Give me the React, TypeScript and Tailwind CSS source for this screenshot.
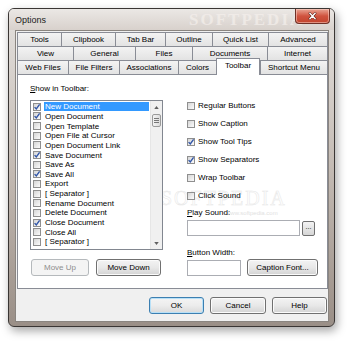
import React from "react";

const font = "font-['Liberation_Sans',Arial,sans-serif]";

function Box({ checked }: { checked?: boolean }) {
  return (
    <span className="relative inline-block h-[8px] w-[8px] shrink-0 border border-[#8f8f8f] bg-gradient-to-br from-[#d6d6d6] to-[#fbfbfb]">
      {checked && (
        <svg viewBox="0 0 8 8" className="absolute -left-px -top-px h-[8px] w-[8px]">
          <path d="M1.6 4.1 L3.3 6 L6.6 1.3" stroke="#3156a8" strokeWidth="1.4" fill="none" />
        </svg>
      )}
    </span>
  );
}

const rows: { label: string; w: number }[][] = [
  [
    { label: "Tools", w: 44 },
    { label: "Clipbook", w: 54 },
    { label: "Tab Bar", w: 50 },
    { label: "Outline", w: 47 },
    { label: "Quick List", w: 56 },
    { label: "Advanced", w: 59 },
  ],
  [
    { label: "View", w: 56 },
    { label: "General", w: 62 },
    { label: "Files", w: 57 },
    { label: "Documents", w: 75 },
    { label: "Internet", w: 60 },
  ],
  [
    { label: "Web Files", w: 51 },
    { label: "File Filters", w: 51 },
    { label: "Associations", w: 59 },
    { label: "Colors", w: 38 },
    { label: "Toolbar", w: 44 },
    { label: "Shortcut Menu", w: 67 },
  ],
];

const items: [string, boolean][] = [
  ["New Document", true],
  ["Open Document", true],
  ["Open Template", false],
  ["Open File at Cursor", false],
  ["Open Document Link", false],
  ["Save Document", true],
  ["Save As", false],
  ["Save All", true],
  ["Export", false],
  ["[ Separator ]", false],
  ["Rename Document", false],
  ["Delete Document", false],
  ["Close Document", true],
  ["Close All", false],
  ["[ Separator ]", false],
];

const options: [string, boolean][] = [
  ["Regular Buttons", false],
  ["Show Caption", false],
  ["Show Tool Tips", true],
  ["Show Separators", true],
  ["Wrap Toolbar", false],
  ["Click Sound", false],
];

function Btn({ children, w, disabled, focus }: { children: React.ReactNode; w: number; disabled?: boolean; focus?: boolean }) {
  return (
    <div
      style={{ width: w }}
      className={`flex h-[17px] items-center justify-center rounded-[3px] border text-[8px] ${
        disabled
          ? "border-[#b5b9bc] bg-[#f4f4f4] text-[#8d8d8d]"
          : focus
          ? "border-[#3c7fb1] bg-gradient-to-b from-[#f4f4f4] via-[#ececec] to-[#d9d9d9] text-black shadow-[inset_0_0_0_1px_#b8e0f7]"
          : "border-[#707070] bg-gradient-to-b from-[#f3f3f3] via-[#e8e8e8] to-[#d3d3d3] text-black shadow-[inset_0_0_0_1px_#fbfbfb]"
      }`}
    >
      {children}
    </div>
  );
}

export default function App() {
  return (
    <div className={`h-[341px] w-[350px] overflow-hidden bg-white pl-[8px] pt-[8px] ${font}`}>
      <div className="relative h-[319px] w-[327px] rounded-[6px] border border-[#3a3634] bg-gradient-to-b from-[#e4e1de] via-[#c4bbb4] to-[#9a8f87] shadow-[2px_4px_10px_rgba(0,0,0,0.35)]">
        {/* title bar */}
        <div className="relative flex h-[21px] items-start justify-between overflow-hidden rounded-t-[5px] bg-gradient-to-b from-[#ebe8e5] to-[#d8d1cc]">
          <span className="pl-[6px] pt-[6px] text-[9px] leading-[10px] text-[#1b1b1b]">Options</span>
          <span className="absolute left-[180px] top-[2px] font-['Liberation_Serif',serif] text-[17px] font-bold leading-[18px] tracking-[2px] text-[#f4efec] opacity-70">
            SOFTPEDIA
          </span>
          <div className="relative mr-[4px] flex h-[15px] w-[35px] items-center justify-center rounded-b-[4px] border border-t-0 border-[#6e3026] bg-gradient-to-b from-[#e8a595] via-[#d0533f] to-[#c2432c] shadow-[inset_0_0_0_1px_rgba(255,220,210,0.5)]">
            <svg viewBox="0 0 10 9" className="h-[8px] w-[9px]">
              <path d="M2 1.5 L8 7.5 M8 1.5 L2 7.5" stroke="#5a2018" strokeWidth="2.8" strokeLinecap="round" />
              <path d="M2 1.5 L8 7.5 M8 1.5 L2 7.5" stroke="#ffffff" strokeWidth="1.6" strokeLinecap="round" />
            </svg>
          </div>
        </div>

        {/* client */}
        <div className="ml-[6px] h-[292px] w-[314px] border border-[#8a8580] bg-[#f0f0f0] pl-[1px] pt-[1px] text-black">
          <div className="w-[311px]">
            {rows.map((row, ri) => (
              <div key={ri} className="flex h-[14px] items-start">
                {row.map((t, i) => {
                  const sel = t.label === "Toolbar";
                  return (
                    <div
                      key={t.label}
                      style={{ width: t.w + (i === row.length - 1 ? 1 : 0) }}
                      className={`flex items-center justify-center border-l border-t border-[#898c95] text-[8px] leading-none ${
                        i === row.length - 1 ? "border-r" : ""
                      } ${
                        sel
                          ? "relative z-10 -mt-[2px] h-[17px] border-r bg-white pb-[2px]"
                          : "h-[14px] bg-gradient-to-b from-[#f3f3f3] to-[#e3e3e3]"
                      }`}
                    >
                      {t.label}
                    </div>
                  );
                })}
              </div>
            ))}

            {/* panel */}
            <div className="relative flex h-[215px] w-[311px] border border-[#898c95] bg-white pl-[12px] pt-[9px]">
              <span className="pointer-events-none absolute left-[143px] top-[108px] font-['Liberation_Serif',serif] text-[20px] tracking-[2px] text-white [-webkit-text-stroke:0.5px_#e6e6e6]">
                SOFTPEDIA
              </span>
              <span className="pointer-events-none absolute left-[208px] top-[134px] text-[6px] text-[#e2e2e2]">
                www.softpedia.com
              </span>

              <div className="relative flex w-[133px] flex-col">
                <div className="h-[10px] text-[8px] leading-[10px]">
                  <span className="underline">S</span>how in Toolbar:
                </div>
                <div className="mt-[6px] flex h-[150px] border border-[#828790] bg-white">
                  <div className="flex-1 pt-[1px]">
                    {items.map(([label, checked], i) => (
                      <div key={i} className="flex h-[9.65px] items-center pl-[2px]">
                        <Box checked={checked} />
                        <span
                          className={`ml-[3px] text-[8px] leading-[9px] ${
                            i === 0 ? "w-[105px] bg-[#3399ff] pl-[1px] text-white" : "pl-[1px]"
                          }`}
                        >
                          {label}
                        </span>
                      </div>
                    ))}
                  </div>
                  <div className="flex w-[12px] flex-col border-l border-[#e6e6e6] bg-[#f0f0f0]">
                    <div className="flex h-[12px] items-center justify-center">
                      <svg viewBox="0 0 6 4" className="h-[3px] w-[5px]">
                        <path d="M0 4 L3 0 L6 4 Z" fill="#606060" />
                      </svg>
                    </div>
                    <div className="mx-[1px] mt-[1px] flex h-[13px] flex-col items-center justify-center gap-[1px] rounded-[2px] border border-[#9a9a9a] bg-gradient-to-r from-[#f3f3f3] to-[#dcdcdc]">
                      <span className="h-px w-[5px] bg-[#777]" />
                      <span className="h-px w-[5px] bg-[#777]" />
                      <span className="h-px w-[5px] bg-[#777]" />
                    </div>
                    <div className="flex-1" />
                    <div className="flex h-[12px] items-center justify-center">
                      <svg viewBox="0 0 6 4" className="h-[3px] w-[5px]">
                        <path d="M0 0 L3 4 L6 0 Z" fill="#606060" />
                      </svg>
                    </div>
                  </div>
                </div>
                <div className="mt-[9px] flex gap-[7px] pl-[1px]">
                  <Btn w={58} disabled>
                    Move Up
                  </Btn>
                  <Btn w={65}>Move Down</Btn>
                </div>
              </div>

              <div className="relative ml-[24px] mt-[17px] flex flex-col">
                {options.map(([label, checked]) => (
                  <div key={label} className="mb-[8px] flex h-[10px] items-center">
                    <Box checked={checked} />
                    <span className="ml-[3px] text-[8px] leading-[10px]">{label}</span>
                  </div>
                ))}
                <div className="-mt-[1px] h-[10px] text-[8px] leading-[10px]">
                  <span className="underline">P</span>lay Sound:
                </div>
                <div className="mt-[2px] flex items-center gap-[2px]">
                  <div className="h-[16px] w-[113px] border border-[#abadb3] bg-white" />
                  <div className="flex h-[15px] w-[13px] items-start justify-center rounded-[2px] border border-[#707070] bg-gradient-to-b from-[#f3f3f3] to-[#d6d6d6] text-[7px] leading-[9px]">
                    ...
                  </div>
                </div>
                <div className="mt-[12px] h-[10px] text-[8px] leading-[10px]">
                  <span className="underline">B</span>utton Width:
                </div>
                <div className="mt-[1px] flex items-center gap-[6px]">
                  <div className="h-[16px] w-[54px] border border-[#abadb3] bg-white" />
                  <Btn w={71}>Caption Font...</Btn>
                </div>
              </div>
            </div>

            <div className="mt-[8px] flex justify-end gap-[6px] pr-[1px]">
              <Btn w={55} focus>
                OK
              </Btn>
              <Btn w={56}>Cancel</Btn>
              <Btn w={55}>Help</Btn>
            </div>
          </div>
        </div>
      </div>
    </div>
  );
}
